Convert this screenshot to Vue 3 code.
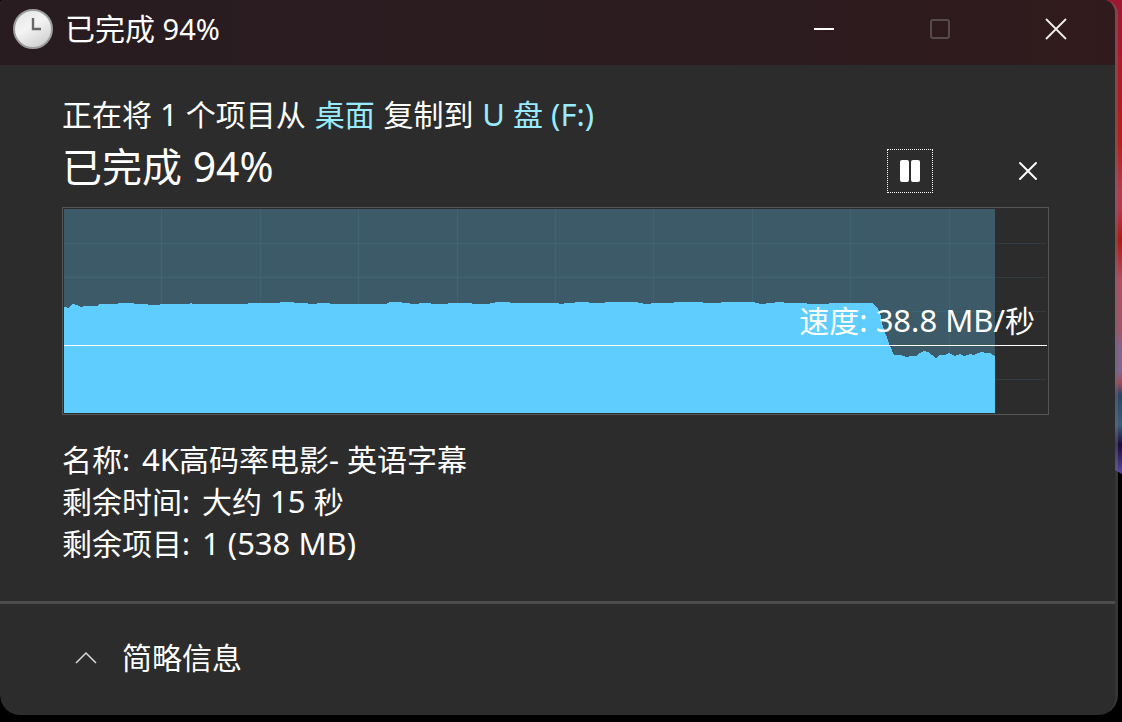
<script setup>
const progress = 94.5
const columns = [97, 196, 294, 393, 491, 589, 688, 786, 885]
const rows = [34, 68, 102, 136, 170]
const speeds = [
  [0, 98], [5, 99], [8, 95], [13, 96], [17, 98], [20, 97], [33, 97], [35, 95], [48, 95],
  [59, 94], [69, 94], [70, 95], [83, 95], [84, 96], [95, 96], [96, 95], [125, 95],
  [126, 94], [130, 95], [176, 95], [193, 94], [215, 94], [216, 93], [243, 94], [244, 95],
  [262, 94], [270, 95], [322, 95], [323, 94], [326, 93], [337, 93], [338, 94], [345, 94],
  [346, 95], [354, 95], [355, 94], [378, 95], [390, 94], [425, 95], [426, 94], [435, 93],
  [445, 93], [446, 94], [494, 94], [495, 95], [505, 94], [516, 93], [524, 93], [525, 94],
  [557, 93], [573, 93], [574, 94], [583, 95], [591, 94], [628, 93], [638, 93], [639, 94],
  [675, 93], [690, 93], [691, 94], [698, 95], [715, 93], [725, 94], [760, 95], [770, 94],
  [808, 94], [812, 97], [816, 103], [818, 114], [822, 126], [826, 137], [830, 146],
  [836, 146], [842, 148], [848, 147], [852, 147], [856, 144], [860, 142], [864, 143],
  [868, 146], [872, 149], [876, 146], [881, 146], [885, 144], [891, 147], [896, 145],
  [900, 147], [906, 145], [910, 146], [914, 144], [918, 143], [922, 144], [926, 144],
  [931, 147]
]
const area = `M0 204 ${speeds.map(([x, y]) => `L${x} ${y}`).join(' ')} V204 Z`
</script>

<template>
  <div class="desktop">
    <div class="wallpaper" aria-hidden="true"></div>
    <section class="window">
      <header class="titlebar">
        <svg class="clock" viewBox="0 0 40 40" aria-hidden="true">
          <defs>
            <linearGradient id="face" x1="0" y1="0" x2="0.6" y2="1">
              <stop offset="0" stop-color="#e2e2e2" />
              <stop offset="0.5" stop-color="#f4f4f4" />
              <stop offset="1" stop-color="#d2d2d2" />
            </linearGradient>
          </defs>
          <circle cx="20" cy="20" r="19" fill="url(#face)" stroke="#9b9d9d" stroke-width="2" />
          <path d="M20 9V20H28" fill="none" stroke="#686868" stroke-width="2.4" />
        </svg>
        <span class="title">已完成<span class="latin"> 94%</span></span>
        <div class="controls">
          <button type="button" aria-label="最小化">
            <svg viewBox="0 0 24 24"><path d="M2 12H22" stroke="#fff" stroke-width="2" /></svg>
          </button>
          <button type="button" aria-label="最大化" disabled>
            <svg viewBox="0 0 24 24"><rect x="3" y="3" width="18" height="18" rx="2" fill="none" stroke="#574a4d" stroke-width="2" /></svg>
          </button>
          <button type="button" aria-label="关闭">
            <svg viewBox="0 0 24 24"><path d="M2 2L22 22M22 2L2 22" stroke="#f2eeee" stroke-width="1.8" /></svg>
          </button>
        </div>
      </header>

      <main class="content">
        <p class="route">正在将<span class="latin"> 1 </span>个项目从 <a href="#">桌面</a> 复制到 <a href="#"><span class="latin">U </span>盘<span class="latin"> (F:)</span></a></p>
        <div class="status">
          <h1>已完成<span class="latin"> 94%</span></h1>
          <div class="actions">
            <button type="button" class="pause" aria-label="暂停">
              <svg viewBox="0 0 24 24"><rect x="2" y="1" width="9" height="22" rx="2" fill="#fff" /><rect x="13" y="1" width="9" height="22" rx="2" fill="#fff" /></svg>
            </button>
            <button type="button" aria-label="取消">
              <svg viewBox="0 0 24 24"><path d="M4 4L20 20M20 4L4 20" stroke="#fff" stroke-width="2" stroke-linecap="round" /></svg>
            </button>
          </div>
        </div>
        <div class="chart">
          <div class="done" :style="{ width: progress + '%' }"></div>
          <svg viewBox="0 0 983 204" preserveAspectRatio="none" aria-hidden="true">
            <g class="grid">
              <rect v-for="x in columns" :key="'c' + x" :x="x" y="0" width="1" height="204" />
              <rect v-for="y in rows" :key="'r' + y" x="0" :y="y" width="982" height="1" />
            </g>
            <path :d="area" fill="#60cdff" shape-rendering="crispEdges" />
            <rect x="0" y="136" width="983" height="1" fill="#fff" />
          </svg>
          <span class="speed">速度<span class="latin">: 38.8 MB/</span>秒</span>
        </div>
        <dl class="details">
          <div><dt>名称:</dt><dd><span class="latin">4K</span>高码率电影<span class="latin">- </span>英语字幕</dd></div>
          <div><dt>剩余时间:</dt><dd>大约<span class="latin"> 15 </span>秒</dd></div>
          <div><dt>剩余项目:</dt><dd><span class="latin">1 (538 MB)</span></dd></div>
        </dl>
      </main>

      <footer class="footer">
        <button type="button" class="toggle">
          <svg viewBox="0 0 24 24" aria-hidden="true"><path d="M2 17L12 7L22 17" fill="none" stroke="#d8d8d8" stroke-width="1.5" /></svg>
          <span>简略信息</span>
        </button>
      </footer>
    </section>
  </div>
</template>

<style>
body {
  margin: 0;
  background: #000;
}
</style>

<style scoped>
* {
  box-sizing: border-box;
}

.desktop {
  position: relative;
  display: flex;
  min-height: 100vh;
  padding: 0 4px 7px 0;
  background: #000;
  color: #fff;
  font-family: "Noto Sans", "Noto Sans CJK SC", sans-serif;
  font-size: 30px;
  line-height: 42px;
}

.wallpaper {
  position: absolute;
  top: 0;
  right: 0;
  width: 20px;
  height: 474px;
  background: linear-gradient(#9c1830 0, #a81c2c 60px, #b1201c 140px, #b03c4c 190px, #b5384c 210px, #a81c18 240px, #b24e60 280px, #a05468 330px, #81648f 350px, #81648f 372px, #a04c5c 382px, #2c4366 395px, #3d5c7c 425px, #1a0a3c 445px, #5a4ba0 474px);
  clip-path: polygon(0 0, 100% 0, 100% 100%, 13px 470px, 0 462px);
}

.window {
  position: relative;
  display: flex;
  flex: 1;
  flex-direction: column;
  min-width: 0;
  border-right: 3px solid rgba(104, 108, 112, 0.5);
  border-radius: 3px 14px 20px 20px;
  background: #2c2c2c;
  background-clip: padding-box;
  overflow: hidden;
}

.titlebar {
  display: flex;
  align-items: center;
  height: 65px;
  padding: 0 1px 7px 13px;
  background: linear-gradient(90deg, #281c20, #2c1b1f 70%, #301a1c);
}

.clock {
  width: 40px;
  height: 40px;
  margin-right: 12px;
}

.title {
  flex: 1;
  white-space: nowrap;
}

.latin {
  font-size: 31px;
  line-height: 1;
  white-space: pre-wrap;
}

.title .latin {
  font-size: 29px;
}

h1 .latin {
  font-size: 41px;
}

button {
  display: flex;
  align-items: center;
  justify-content: center;
  padding: 0;
  border: 0;
  background: none;
  color: inherit;
  font: inherit;
}

button svg {
  width: 24px;
  height: 24px;
}

.controls {
  display: flex;
}

.controls button {
  width: 116px;
  height: 58px;
}

.content {
  flex: 1;
  padding: 29px 66px 0 62px;
}

.route {
  margin: 0;
}

a {
  padding: 0 1px;
  color: #99ebff;
  text-decoration: none;
}

.status {
  display: flex;
  align-items: center;
  justify-content: space-between;
  height: 71px;
}

h1 {
  margin: 0;
  padding-bottom: 10px;
  font-size: 40px;
  font-weight: 400;
  line-height: 56px;
}

.actions {
  display: flex;
  gap: 72px;
  margin: 0 -2px 2px 0;
}

.actions button {
  width: 46px;
  height: 44px;
}

.actions .pause {
  border: 1px dotted #fff;
}

.chart {
  position: relative;
  height: 208px;
  border: 1px solid #555;
  padding: 1px;
}

.chart svg {
  position: relative;
  display: block;
  width: 100%;
  height: 204px;
}

.done {
  position: absolute;
  inset: 1px auto 1px 1px;
  background: #3d5a69;
}

.grid {
  fill: rgba(75, 150, 165, 0.16);
}

.speed {
  position: absolute;
  top: 92px;
  right: 13px;
}

.details {
  margin: 24px 0 0;
}

.details div {
  display: flex;
  gap: 12px;
}

.details dd {
  margin: 0;
}

.footer {
  display: flex;
  align-items: center;
  height: 114px;
  padding: 0 74px 4px;
  border-top: 3px solid #4c4c4c;
}

.toggle {
  gap: 24px;
}
</style>
